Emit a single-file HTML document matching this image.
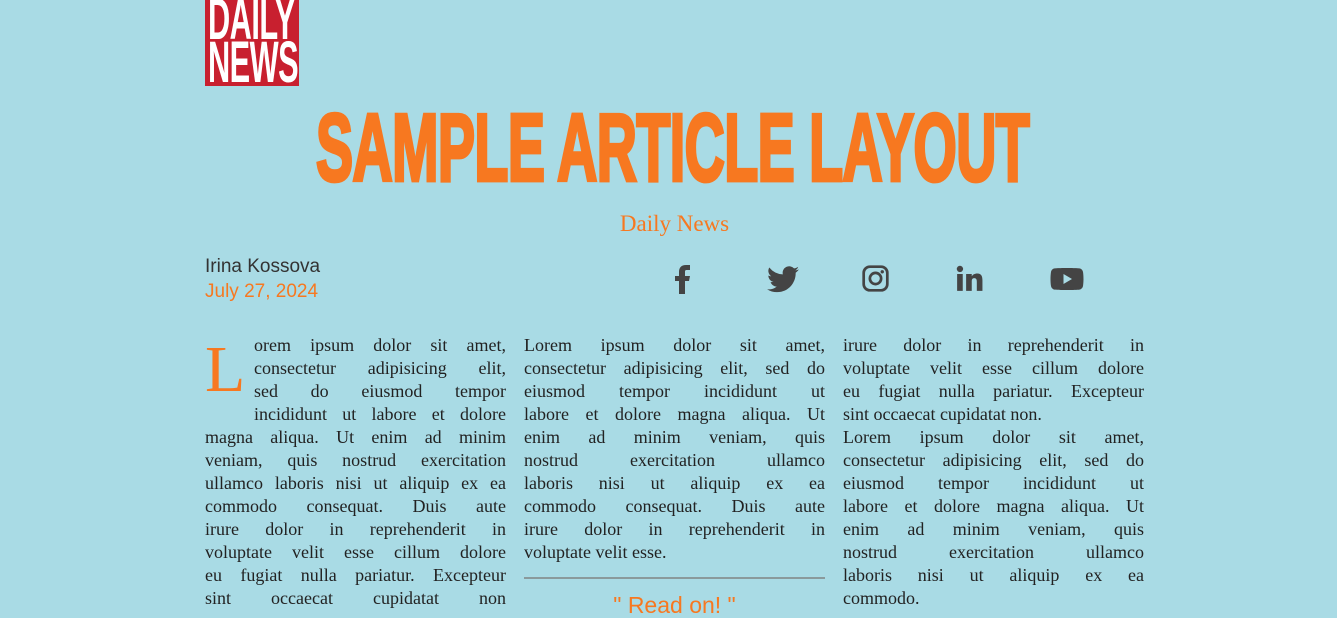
<!DOCTYPE html>
<html><head><style>
body{margin:0;background:#a9dbe5;width:1337px;height:611px;overflow:hidden;position:relative;font-family:"Liberation Serif",serif}
.logo{position:absolute;left:205px;top:0;width:94px;height:86px;background:#c8202f;color:#fff;font-family:"Liberation Sans",sans-serif;font-weight:bold;overflow:hidden}
.logo div{position:absolute;left:3px;font-size:58px;line-height:46px;transform:scaleX(.53);transform-origin:left top;white-space:nowrap;letter-spacing:-1px}
.title{position:absolute;left:316px;top:100px;color:#f77820;font-family:"Liberation Sans",sans-serif;font-weight:900;font-size:100px;line-height:100px;white-space:nowrap;transform:scaleX(.556) scaleY(.96);transform-origin:left top;letter-spacing:-1px;-webkit-text-stroke:4px #f77820}
.sub{position:absolute;left:0;width:1349px;text-align:center;top:211px;color:#f77820;font-size:23px}
.auth{position:absolute;left:205px;top:256px;font-family:"Liberation Sans",sans-serif;font-size:19px;color:#333}
.date{position:absolute;left:205px;top:281px;font-family:"Liberation Sans",sans-serif;font-size:19px;color:#f77820}
.col{position:absolute;top:334px;width:301px;font-size:18px;line-height:23px;color:#222}
.col div.l{text-align:justify;text-align-last:justify;white-space:nowrap;height:23px}
.col div.e{white-space:nowrap;height:23px}
.drop{position:absolute;left:0;top:6px;font-size:66px;line-height:60px;color:#f77820}
.ind{margin-left:49px}
svg{position:absolute;fill:#444}
</style></head><body>
<div class="logo"><div style="top:-3px">DAILY</div><div style="top:40px">NEWS</div></div>
<div class="title">SAMPLE ARTICLE LAYOUT</div>
<div class="sub">Daily News</div>
<div class="auth">Irina Kossova</div>
<div class="date">July 27, 2024</div>
<svg style="left:673px;top:264px" width="20" height="30" viewBox="0 0 20 30"><path d="M6 30V17H2v-5h4V8c0-4 2-7 7-7h4v5h-3c-2 0-2 1-2 2v4h5l-1 5h-4v13z"/></svg>
<svg style="left:767px;top:266px" width="32" height="27" viewBox="0 0 24 20"><path d="M24 2.4c-.9.4-1.8.7-2.8.8 1-.6 1.8-1.6 2.200-2.7-1 .6-2 1-3.1 1.2A4.9 4.9 0 0 0 11.9 6.2 14 14 0 0 1 1.7 1 4.9 4.9 0 0 0 3.2 7.6c-.8 0-1.6-.3-2.2-.6 0 2.4 1.7 4.4 3.9 4.8-.7.2-1.5.2-2.2.1.6 2 2.4 3.4 4.6 3.4A9.900 9.900 0 0 1 0 17.3 14 14 0 0 0 7.5 19.5c9 0 14-7.5 14-14v-.6c1-.7 1.8-1.6 2.5-2.5z"/></svg>
<svg style="left:862px;top:265px" width="27" height="27" viewBox="0 0 24 24"><path fill="none" stroke="#444" stroke-width="2.4" d="M7 1.5h10A5.5 5.5 0 0 1 22.5 7v10a5.5 5.5 0 0 1-5.5 5.5H7A5.5 5.5 0 0 1 1.5 17V7A5.5 5.5 0 0 1 7 1.5zM12 7a5 5 0 1 0 0 10 5 5 0 0 0 0-10z"/><circle cx="18" cy="6" r="1.5"/></svg>
<svg style="left:956px;top:265px" width="27" height="27" viewBox="0 0 24 24"><rect x="1" y="8" width="5" height="15"/><circle cx="3.5" cy="3.5" r="2.8"/><path d="M9 8h5v2c1-1.5 2.5-2.5 5-2.5 3.5 0 4.5 2.5 4.5 6V23h-5v-8c0-2-.5-3.3-2.3-3.3S14 13 14 15v8H9z"/></svg>
<svg style="left:1050px;top:266px" width="34" height="26" viewBox="0 0 34 24"><path d="M33 5c-.4-2-1.8-3.3-3.6-3.6C26.5 1 17 1 17 1S7.5 1 4.6 1.4C2.8 1.7 1.4 3 1 5c-.5 3-.5 7-.5 7s0 4 .5 7c.4 2 1.800 3.300 3.600 3.600C7.5 23 17 23 17 23s9.5 0 12.4-.4c1.8-.3 3.2-1.6 3.6-3.6.5-3 .5-7 .5-7s0-4-.5-7zM13.5 17V7l8.5 5z"/></svg>
<div class="col" style="left:205px"><span class="drop">L</span>
<div class="l ind">orem ipsum dolor sit amet,</div>
<div class="l ind">consectetur adipisicing elit,</div>
<div class="l ind">sed do eiusmod tempor</div>
<div class="l ind">incididunt ut labore et dolore</div>
<div class="l">magna aliqua. Ut enim ad minim</div>
<div class="l">veniam, quis nostrud exercitation</div>
<div class="l">ullamco laboris nisi ut aliquip ex ea</div>
<div class="l">commodo consequat. Duis aute</div>
<div class="l">irure dolor in reprehenderit in</div>
<div class="l">voluptate velit esse cillum dolore</div>
<div class="l">eu fugiat nulla pariatur. Excepteur</div>
<div class="l">sint occaecat cupidatat non</div>
</div>
<div class="col" style="left:524px">
<div class="l">Lorem ipsum dolor sit amet,</div>
<div class="l">consectetur adipisicing elit, sed do</div>
<div class="l">eiusmod tempor incididunt ut</div>
<div class="l">labore et dolore magna aliqua. Ut</div>
<div class="l">enim ad minim veniam, quis</div>
<div class="l">nostrud exercitation ullamco</div>
<div class="l">laboris nisi ut aliquip ex ea</div>
<div class="l">commodo consequat. Duis aute</div>
<div class="l">irure dolor in reprehenderit in</div>
<div class="e">voluptate velit esse.</div>
<div style="border-top:2px solid #8a9a9c;margin-top:13px"></div>
<div style="text-align:center;color:#f77820;font-family:'Liberation Sans',sans-serif;font-size:23px;margin-top:15px">" Read on! "</div></div>
<div class="col" style="left:843px">
<div class="l">irure dolor in reprehenderit in</div>
<div class="l">voluptate velit esse cillum dolore</div>
<div class="l">eu fugiat nulla pariatur. Excepteur</div>
<div class="e">sint occaecat cupidatat non.</div>
<div class="l">Lorem ipsum dolor sit amet,</div>
<div class="l">consectetur adipisicing elit, sed do</div>
<div class="l">eiusmod tempor incididunt ut</div>
<div class="l">labore et dolore magna aliqua. Ut</div>
<div class="l">enim ad minim veniam, quis</div>
<div class="l">nostrud exercitation ullamco</div>
<div class="l">laboris nisi ut aliquip ex ea</div>
<div class="e">commodo.</div>
</div>
</body></html>
